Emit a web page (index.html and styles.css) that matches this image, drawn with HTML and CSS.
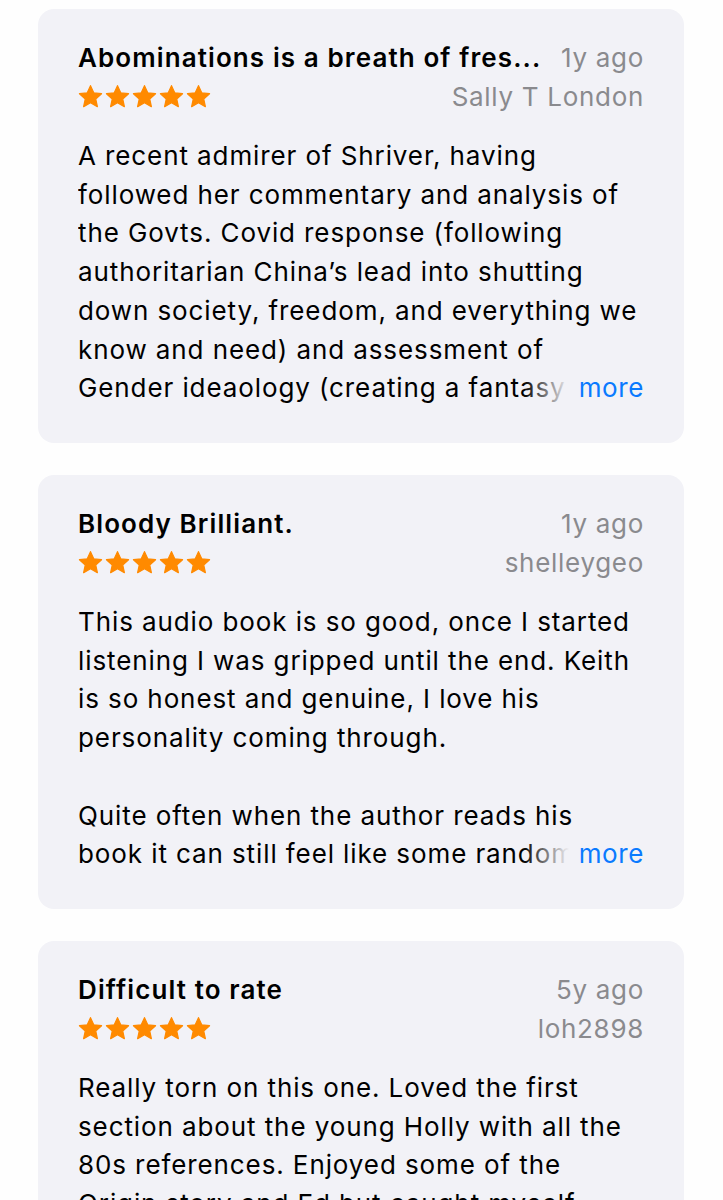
FILE: index.html
```html
<!DOCTYPE html>
<html lang="en">
<head>
    <meta charset="UTF-8">
    <meta name="viewport" content="width=device-width, initial-scale=1.0">
    <title>Ratings &amp; Reviews</title>
    <link rel="stylesheet" href="styles.css">
</head>
<body>

    <svg width="0" height="0" class="defs">
        <symbol id="star" viewBox="0 0 24 24">
            <path d="M12 1.6l3.1 6.9 7.5.8-5.6 5.1 1.6 7.4L12 18l-6.6 3.8 1.6-7.4-5.6-5.1 7.5-.8z" stroke-linejoin="round"/>
        </symbol>
    </svg>

    <div class="reviews">

        <div class="review">
            <div class="review-head">
                <span class="review-title">Abominations is a breath of fres...</span>
                <span class="review-meta">1y ago</span>
            </div>
            <div class="review-sub">
                <span class="stars">
                    <svg><use href="#star"/></svg><svg><use href="#star"/></svg><svg><use href="#star"/></svg><svg><use href="#star"/></svg><svg><use href="#star"/></svg>
                </span>
                <span class="review-meta">Sally T London</span>
            </div>
            <div class="review-body">
                <p>A recent admirer of Shriver, having followed her commentary and analysis of the Govts. Covid response (following authoritarian China’s lead into shutting down society, freedom, and everything we know and need) and assessment of Gender ideaology (creating a fantasy world</p>
                <span class="more">more</span>
            </div>
        </div>

        <div class="review">
            <div class="review-head">
                <span class="review-title">Bloody Brilliant.</span>
                <span class="review-meta">1y ago</span>
            </div>
            <div class="review-sub">
                <span class="stars">
                    <svg><use href="#star"/></svg><svg><use href="#star"/></svg><svg><use href="#star"/></svg><svg><use href="#star"/></svg><svg><use href="#star"/></svg>
                </span>
                <span class="review-meta">shelleygeo</span>
            </div>
            <div class="review-body">
                <p>This audio book is so good, once I started listening I was gripped until the end. Keith is so honest and genuine, I love his personality coming through.</p>
                <p class="para">Quite often when the author reads his book it can still feel like some random reading</p>
                <span class="more">more</span>
            </div>
        </div>

        <div class="review">
            <div class="review-head">
                <span class="review-title">Difficult to rate</span>
                <span class="review-meta">5y ago</span>
            </div>
            <div class="review-sub">
                <span class="stars">
                    <svg><use href="#star"/></svg><svg><use href="#star"/></svg><svg><use href="#star"/></svg><svg><use href="#star"/></svg><svg><use href="#star"/></svg>
                </span>
                <span class="review-meta">loh2898</span>
            </div>
            <div class="review-body">
                <p>Really torn on this one. Loved the first section about the young Holly with all the 80s references. Enjoyed some of the Origin story and Ed but caught myself drifting off in places</p>
                <span class="more">more</span>
            </div>
        </div>

    </div>

</body>
</html>
```

FILE: styles.css
```css
/* review cards */
body {
    font-family: Inter, "Noto Sans", sans-serif;
    background-color: #fefefe;
    margin: 0;
    padding: 9px 39px 0 38px;
    color: #000;
}

.defs {
    position: absolute;
}

.reviews {
    display: flex;
    flex-direction: column;
    gap: 32px;
}

.review {
    background-color: #f2f2f7;
    border-radius: 16px;
    padding: 30px 40px 36px 40px;
    height: 434px;
    box-sizing: border-box;
    overflow: hidden;
}

.review-head,
.review-sub {
    display: flex;
    justify-content: space-between;
    align-items: center;
    gap: 16px;
    height: 36px;
}

.review-sub {
    height: 40px;
    margin-top: 1px;
}

.review-title {
    font-size: 26px;
    font-weight: 600;
    letter-spacing: 1.1px;
    white-space: nowrap;
}

.review-meta {
    font-size: 26px;
    color: #8a8a8e;
    letter-spacing: 0.7px;
    white-space: nowrap;
}

.stars {
    display: flex;
    gap: 2px;
}

.stars svg {
    width: 25px;
    height: 25px;
    fill: #ff8a00;
    stroke: #ff8a00;
    stroke-width: 1.2;
}

.review-body {
    position: relative;
    margin-top: 21px;
    font-size: 26px;
    line-height: 38.7px;
    letter-spacing: 0.9px;
    max-height: 271px;
    overflow: hidden;
}

.review-body p {
    margin: 0;
}

.review-body .para {
    margin-top: 38.7px;
}

.more {
    position: absolute;
    right: 0;
    bottom: 0;
    color: #0a7aff;
    letter-spacing: 0.6px;
    padding-left: 56px;
    background: linear-gradient(to right, rgba(242, 242, 247, 0), #f2f2f7 46px);
}
```
